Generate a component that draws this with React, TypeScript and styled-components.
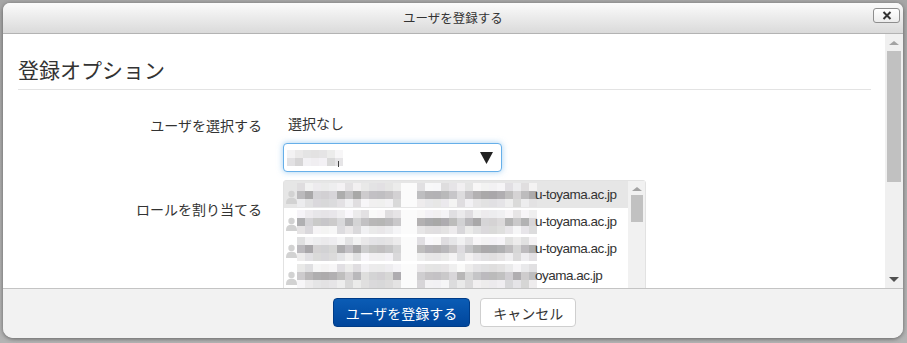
import { FC } from "react";
import styled, { createGlobalStyle } from "styled-components";

const GlobalStyle = createGlobalStyle`
  html, body {
    margin: 0;
    padding: 0;
    background: #a3a3a3;
  }
  body {
    font-family: "Noto Sans CJK JP", "Liberation Sans", sans-serif;
    color: #333;
  }
`;

// deterministic grey for the privacy mosaic
const shadeOf = (seed: number, col: number, strip: number) => {
  const n = (seed * 131 + col * 57 + strip * 29 + col * col * 7) % 97;
  const ranges = [
    [222, 250],
    [168, 222],
    [214, 248],
  ];
  const [lo, hi] = ranges[strip];
  const v = Math.round(lo + ((hi - lo) * n) / 96);
  return `rgb(${v}, ${v - (n % 3)}, ${v + (n % 4) - 1})`;
};

interface IMosaic {
  seed: number;
  cols: number;
  strips?: number;
}

const Mosaic: FC<IMosaic> = ({ seed, cols, strips = 3 }) => (
  <MosaicGrid $cols={cols}>
    {Array.from({ length: strips }).map((_, s) =>
      Array.from({ length: cols }).map((__, c) => (
        <span
          key={`${s}-${c}`}
          style={{
            background:
              cols > 10 && (c === 13 || c === 14)
                ? "#fbfbfb"
                : shadeOf(seed, c, strips === 2 ? s * 2 : s),
          }}
        />
      ))
    )}
  </MosaicGrid>
);

const Avatar = () => (
  <svg width="11" height="14" viewBox="0 0 11 14">
    <circle cx="5.5" cy="4" r="3.2" fill="#d2d2d2" />
    <path d="M0 14 C0 9 2 7.8 5.5 7.8 C9 7.8 11 9 11 14 Z" fill="#d2d2d2" />
  </svg>
);

const users = [
  { seed: 3, cols: 30, tail: "u-toyama.ac.jp", active: true },
  { seed: 11, cols: 30, tail: "u-toyama.ac.jp", active: false },
  { seed: 23, cols: 30, tail: "u-toyama.ac.jp", active: false },
  { seed: 41, cols: 30, tail: "oyama.ac.jp", active: false },
];

const App = () => (
  <>
    <GlobalStyle />
    <Backdrop>
      <Dialog>
        <Header>
          <Title>ユーザを登録する</Title>
          <CloseButton aria-label="close">
            <svg width="10" height="9" viewBox="0 0 10 9">
              <path
                d="M1.5 1 L8.5 8 M8.5 1 L1.5 8"
                stroke="#333"
                strokeWidth="2"
              />
            </svg>
          </CloseButton>
        </Header>
        <Body>
          <Content>
            <Heading>登録オプション</Heading>
            <FormRow>
              <Label>ユーザを選択する</Label>
              <Control>
                <StaticText>選択なし</StaticText>
                <SearchBox>
                  <Mosaic seed={5} cols={7} strips={2} />
                  <Caret />
                  <svg width="13" height="12" viewBox="0 0 13 12">
                    <polygon points="0,0 13,0 6.5,12" fill="#222" />
                  </svg>
                </SearchBox>
              </Control>
            </FormRow>
            <FormRow $gapTop={8}>
              <Label $padTop={19}>ロールを割り当てる</Label>
              <ListBox>
                <ListRows>
                  {users.map((u) => (
                    <ListRow key={u.seed} $active={u.active}>
                      <Avatar />
                      <Mosaic seed={u.seed} cols={u.cols} />
                      <Email>{u.tail}</Email>
                    </ListRow>
                  ))}
                </ListRows>
                <MiniScroll>
                  <ArrowUp />
                  <MiniThumb />
                </MiniScroll>
              </ListBox>
            </FormRow>
          </Content>
          <ScrollTrack>
            <ArrowUp />
            <Thumb />
            <Spacer />
            <ArrowDown />
          </ScrollTrack>
        </Body>
        <Footer>
          <PrimaryButton>ユーザを登録する</PrimaryButton>
          <Button>キャンセル</Button>
        </Footer>
      </Dialog>
    </Backdrop>
  </>
);

export default App;

const Backdrop = styled.div`
  width: 907px;
  height: 343px;
  padding: 3px 4px 5px 3px;
  box-sizing: border-box;
  background: linear-gradient(#a6a6a6, #b4b4b4);
  overflow: hidden;
`;

const Dialog = styled.div`
  width: 900px;
  height: 335px;
  display: flex;
  flex-direction: column;
  background: #f2f2f2;
  border-radius: 7px 7px 10px 10px;
  box-shadow: 0 1px 4px rgba(0, 0, 0, 0.45);
  overflow: hidden;
`;

const Header = styled.div`
  position: relative;
  height: 30px;
  flex: none;
  display: flex;
  align-items: center;
  justify-content: center;
  background: linear-gradient(#fbfbfb, #dadada);
  border-bottom: 1px solid #b3b3b3;
`;

const Title = styled.div`
  font-size: 12.5px;
  color: #333;
  line-height: 1;
`;

const CloseButton = styled.button`
  position: absolute;
  right: 3px;
  top: 5px;
  width: 27px;
  height: 15px;
  padding: 0;
  display: flex;
  align-items: center;
  justify-content: center;
  border: 1px solid #8e8e8e;
  border-radius: 3px;
  background: linear-gradient(#ffffff, #ececec);
`;

const Body = styled.div`
  height: 254px;
  flex: none;
  display: flex;
  background: #fff;
`;

const Content = styled.div`
  flex: 1;
  min-width: 0;
  overflow: hidden;
  padding: 0 14px 0 15px;
`;

const Heading = styled.h2`
  margin: 0;
  padding: 20px 0 5px;
  font-size: 21px;
  font-weight: 400;
  line-height: 30px;
  color: #333;
  border-bottom: 1px solid #e3e3e3;
`;

const FormRow = styled.div<{ $gapTop?: number }>`
  display: grid;
  grid-template-columns: 244px 1fr;
  column-gap: 21px;
  margin-top: ${(p) => p.$gapTop ?? 23}px;
`;

const Label = styled.div<{ $padTop?: number }>`
  text-align: right;
  font-size: 14px;
  line-height: 20px;
  padding-top: ${(p) => p.$padTop ?? 2}px;
  color: #333;
`;

const Control = styled.div`
  display: flex;
  flex-direction: column;
  align-items: flex-start;
`;

const StaticText = styled.div`
  font-size: 14px;
  line-height: 20px;
  padding-left: 5px;
`;

const SearchBox = styled.div`
  margin-top: 10px;
  width: 219px;
  height: 29px;
  box-sizing: border-box;
  display: flex;
  align-items: center;
  padding: 0 8px 0 3px;
  border: 1px solid #66afe9;
  border-radius: 4px;
  box-shadow: 0 0 6px rgba(102, 175, 233, 0.6);
  background: #fff;

  > svg {
    margin-left: auto;
  }
`;

const Caret = styled.span`
  width: 1px;
  height: 6px;
  margin: 12px 0 0 -5px;
  background: #444;
`;

const MosaicGrid = styled.div<{ $cols: number }>`
  display: grid;
  grid-template-columns: repeat(${(p) => p.$cols}, 8px);
  grid-auto-rows: 8px;
  flex: none;

  span {
    display: block;
  }
`;

const ListBox = styled.div`
  width: 363px;
  height: 120px;
  display: flex;
  box-sizing: border-box;
  border: 1px solid #e2e2e2;
  border-radius: 3px 3px 0 0;
  background: #f3f3f3;
`;

const ListRows = styled.div`
  flex: 1;
  display: flex;
  flex-direction: column;
  background: #fff;
`;

const ListRow = styled.div<{ $active: boolean }>`
  height: 27px;
  flex: none;
  display: flex;
  align-items: center;
  padding-left: 2px;
  background: ${(p) => (p.$active ? "#e6e6e6" : "#fff")};

  > svg {
    flex: none;
    margin: 4px 0 0 0;
  }
`;

const Email = styled.span`
  font-family: "Liberation Sans", Arial, sans-serif;
  font-size: 13.5px;
  letter-spacing: -0.5px;
  color: #333;
  margin-left: -2px;
  white-space: nowrap;
`;

const MiniScroll = styled.div`
  width: 17px;
  flex: none;
  display: flex;
  flex-direction: column;
  align-items: center;
  background: #f1f1f1;
  padding-top: 6px;
`;

const MiniThumb = styled.div`
  width: 12px;
  height: 27px;
  margin-top: 4px;
  background: #c1c1c1;
`;

const ScrollTrack = styled.div`
  width: 18px;
  flex: none;
  display: flex;
  flex-direction: column;
  align-items: center;
  background: #f0f0f0;
  padding: 7px 0 6px;
  box-sizing: border-box;
`;

const ArrowUp = styled.div`
  width: 0;
  height: 0;
  border-left: 5px solid transparent;
  border-right: 5px solid transparent;
  border-bottom: 4px solid #a3a3a3;
`;

const ArrowDown = styled.div`
  width: 0;
  height: 0;
  border-left: 5px solid transparent;
  border-right: 5px solid transparent;
  border-top: 5px solid #505050;
`;

const Thumb = styled.div`
  width: 14px;
  height: 131px;
  margin-top: 6px;
  background: #c1c1c1;
`;

const Spacer = styled.div`
  flex: 1;
`;

const Footer = styled.div`
  flex: 1;
  display: flex;
  justify-content: center;
  align-items: flex-start;
  gap: 10px;
  padding: 9px 0 0 3px;
  border-top: 1px solid #c4c4c4;
  background: #f2f2f2;
`;

const Button = styled.button`
  height: 29px;
  padding: 0 12px;
  font-family: "Noto Sans CJK JP", "Liberation Sans", sans-serif;
  font-size: 14px;
  color: #333;
  background: #fff;
  border: 1px solid #cfcfcf;
  border-radius: 4px;
`;

const PrimaryButton = styled(Button)`
  color: #fff;
  background: linear-gradient(#0b5cb5, #00469c);
  border-color: #003c87;
`;
